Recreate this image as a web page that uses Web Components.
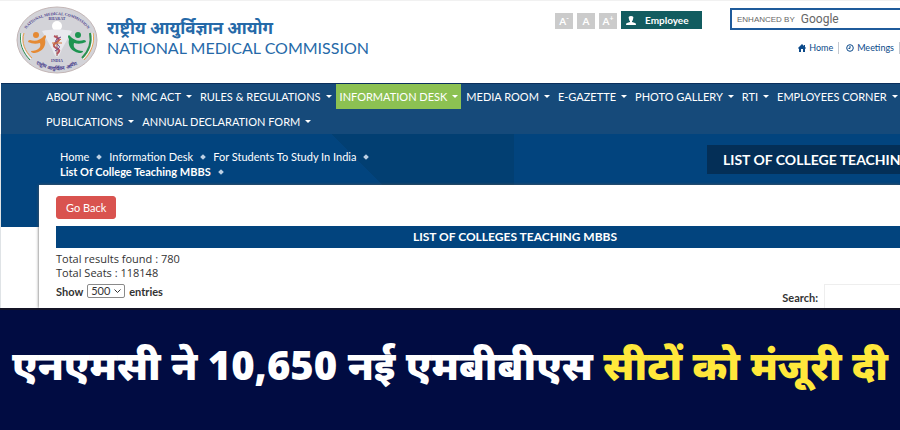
<!DOCTYPE html>
<html lang="hi">
<head>
<meta charset="utf-8">
<meta name="viewport" content="width=device-width, initial-scale=1">
<title>National Medical Commission</title>
<style>
    * {
        box-sizing: border-box;
    }

    body {
        margin: 0px;
        min-height: 100vh;
        display: flex;
        flex-direction: column;
        overflow: hidden;
        background: #ffffff;
        font-family: Lato, "Noto Sans", sans-serif;
        --blue: #02447e;
        --nav: #164a7a;
        --link: #2569a8;
    }
</style>
</head>
<body>
<site-header></site-header>
<site-nav>
    <nav-item>ABOUT NMC</nav-item>
    <nav-item>NMC ACT</nav-item>
    <nav-item>RULES &amp; REGULATIONS</nav-item>
    <nav-item active>INFORMATION DESK</nav-item>
    <nav-item>MEDIA ROOM</nav-item>
    <nav-item>E-GAZETTE</nav-item>
    <nav-item>PHOTO GALLERY</nav-item>
    <nav-item>RTI</nav-item>
    <nav-item>EMPLOYEES CORNER</nav-item>
    <nav-item>PUBLICATIONS</nav-item>
    <nav-item>ANNUAL DECLARATION FORM</nav-item>
</site-nav>
<page-stage>
    <crumb-trail slot="crumbs"></crumb-trail>
    <span slot="title">LIST OF COLLEGE TEACHING</span>
    <college-panel></college-panel>
</page-stage>
<news-banner>एनएमसी ने 10,650 नई एमबीबीएस <span slot="accent">सीटों को मंजूरी दी</span></news-banner>

<script>
class NmcLogo extends HTMLElement {
    constructor() {
        super();
        this.attachShadow({ mode: "open" });
        this.shadowRoot.innerHTML = `
            <style>
                :host {
                    display: block;
                    flex: none;
                    width: 82px;
                    height: 68px;
                }

                svg {
                    display: block;
                    width: 100%;
                    height: 100%;
                }

                text {
                    font-family: "Liberation Serif", serif;
                    font-weight: bold;
                    fill: #4a3f8c;
                    text-anchor: middle;
                }
            </style>
            <svg viewBox="0 0 82 68" role="img" aria-label="National Medical Commission emblem">
                <defs>
                    <path id="top" d="M8 27 A35 27 0 0 1 74 27"/>
                    <path id="bottom" d="M13 54 Q41 74 69 54"/>
                </defs>
                <ellipse cx="41" cy="34" rx="40" ry="33" fill="#d3d3d8" stroke="#c3b6b6"/>
                <g fill="none" stroke-width="1">
                    <path d="M5 27 C3 37 7 47 14 54" stroke="#2c9150"/>
                    <path d="M6 27 C4 37 8 46 15 53" stroke="#ffffff"/>
                    <path d="M8 27 C5 37 9 45 16 52" stroke="#e9a04c"/>
                    <path d="M77 27 C79 37 75 47 68 54" stroke="#e9a04c"/>
                    <path d="M76 27 C78 37 74 46 67 53" stroke="#ffffff"/>
                    <path d="M74 27 C76 37 73 45 66 52" stroke="#2c9150" stroke-width="2"/>
                </g>
                <circle cx="41" cy="20" r="5" fill="#ffffff"/>
                <path d="M26 25 C34 23 48 23 56 25 L46 43 Q43 51 41 51 Q39 51 36 43 Z" fill="#e9e9ee"/>
                <circle cx="20" cy="29" r="3" fill="#e58a34"/>
                <path d="M12 36 Q12 34 14 34 Q22 37 29 29 Q31 30 29 33 Q31 44 19 47 Q15 47 15 45 Q26 44 24 37 Q18 39 12 36 Z" fill="#e58a34"/>
                <circle cx="62" cy="29" r="3" fill="#1d9450"/>
                <path d="M70 36 Q70 34 68 34 Q60 37 53 29 Q51 30 53 33 Q51 44 63 47 Q67 47 67 45 Q56 44 58 37 Q64 39 70 36 Z" fill="#1d9450"/>
                <path d="M41 29 V50" stroke="#8d5a50" stroke-width="1"/>
                <path d="M38 30 Q46 33 41 36 Q35 39 40 42 Q46 44 41 48" fill="none" stroke="#b5525f" stroke-width="2"/>
                <path d="M45 31 Q36 34 42 39 Q46 41 39 45" fill="none" stroke="#6d4791" stroke-width="1"/>
                <path d="M36 37 H46 M37 40 L45 33" stroke="#d3763c" stroke-width="1"/>
                <text font-size="4"><textPath href="#top" startOffset="50%">NATIONAL MEDICAL COMMISSION</textPath></text>
                <text x="41" y="14" font-size="4">BHARAT</text>
                <text x="41" y="56" font-size="4">INDIA</text>
                <text font-size="5"><textPath href="#bottom" startOffset="50%">राष्ट्रीय आयुर्विज्ञान आयोग</textPath></text>
            </svg>
        `;
    }
}

customElements.define("nmc-logo", NmcLogo);

class SiteHeader extends HTMLElement {
    constructor() {
        super();
        this.attachShadow({ mode: "open" });
        this.shadowRoot.innerHTML = `
            <style>
                * {
                    box-sizing: border-box;
                }

                :host {
                    display: flex;
                    align-items: flex-start;
                    height: 83px;
                    padding-left: 16px;
                    border-top: 1px solid #f1f1f1;
                    color: var(--link);
                }

                nmc-logo {
                    margin-top: 5px;
                }

                .names {
                    display: flex;
                    flex-direction: column;
                    flex: 1;
                    margin: 16px 0px 0px 9px;
                    white-space: nowrap;
                }

                .hindi {
                    font-size: 17px;
                    line-height: 21px;
                    font-weight: bold;
                }

                .english {
                    font-size: 16px;
                    line-height: 20px;
                }

                .tools {
                    display: flex;
                    gap: 4px;
                    margin-top: 10px;
                }

                button {
                    border: 0px;
                    padding: 0px;
                    font-family: inherit;
                    color: #ffffff;
                    cursor: pointer;
                }

                .size {
                    width: 18px;
                    height: 16px;
                    margin-top: 2px;
                    background: #cbcbcb;
                    font-size: 10px;
                    font-weight: bold;
                    line-height: 14px;
                }

                sup {
                    font-size: 7px;
                    line-height: 0;
                }

                .employee {
                    display: flex;
                    align-items: center;
                    gap: 9px;
                    width: 81px;
                    height: 18px;
                    padding-left: 5px;
                    background: #125c60;
                    font-size: 10px;
                    font-weight: bold;
                }

                .side {
                    width: 170px;
                    margin: 7px 0px 0px 28px;
                }

                .search {
                    display: flex;
                    align-items: center;
                    gap: 6px;
                    height: 22px;
                    padding-left: 5px;
                    border: 2px solid #1f5b9b;
                    border-right: 0px;
                    color: #666666;
                    font: 8px "Liberation Sans", sans-serif;
                }

                .search b {
                    font: 12px Roboto, sans-serif;
                }

                .search input {
                    flex: 1;
                    min-width: 0px;
                    border: 0px;
                    padding: 0px;
                    outline: none;
                }

                .links {
                    display: flex;
                    align-items: center;
                    justify-content: flex-end;
                    margin-top: 12px;
                    font-size: 9px;
                    line-height: 12px;
                }

                .links a {
                    display: flex;
                    align-items: center;
                    gap: 3px;
                    padding-right: 5px;
                    margin-left: 7px;
                    border-right: 1px solid #c4c9d0;
                    color: #0c4a8a;
                    text-decoration: none;
                }
            </style>
            <nmc-logo></nmc-logo>
            <div class="names">
                <span class="hindi">राष्ट्रीय आयुर्विज्ञान आयोग</span>
                <span class="english">NATIONAL MEDICAL COMMISSION</span>
            </div>
            <div class="tools">
                <button class="size">A<sup>-</sup></button>
                <button class="size">A</button>
                <button class="size">A<sup>+</sup></button>
                <button class="employee">
                    <svg width="10" height="9" viewBox="0 0 10 9" fill="#ffffff"><path d="M5 0 C7 0 8 1 7 3 Q7 5 6 5 V6 L9 7 Q10 7 10 9 H0 Q0 7 1 7 L4 6 V5 Q3 5 3 3 C2 1 3 0 5 0 Z"/></svg>
                    Employee
                </button>
            </div>
            <div class="side">
                <label class="search">ENHANCED BY <b>Google</b><input type="text" aria-label="Search this site"></label>
                <div class="links">
                    <a href="#home">
                        <svg width="8" height="8" viewBox="0 0 8 8" fill="#0c4a8a"><path d="M0 4 L4 0 L6 2 V1 H7 V3 L8 4 L7 5 V8 H5 V5 H3 V8 H1 V5 Z"/></svg>
                        Home
                    </a>
                    <a href="#meetings">
                        <svg width="8" height="8" viewBox="0 0 8 8" fill="none" stroke="#0c4a8a"><circle cx="4" cy="4" r="3.3"/><path d="M4 2 V4.4 H2.4"/></svg>
                        Meetings
                    </a>
                </div>
            </div>
        `;
    }
}

customElements.define("site-header", SiteHeader);

class SiteNav extends HTMLElement {
    constructor() {
        super();
        this.attachShadow({ mode: "open" });
        this.shadowRoot.innerHTML = `
            <style>
                :host {
                    display: block;
                    margin-left: 1px;
                    border-top: 1px solid #0a2f5c;
                    background: var(--nav);
                }

                nav {
                    display: flex;
                    flex-wrap: wrap;
                    margin-right: -8px;
                    padding-left: 41px;
                }
            </style>
            <nav><slot></slot></nav>
        `;
    }
}

customElements.define("site-nav", SiteNav);

class NavItem extends HTMLElement {
    constructor() {
        super();
        this.attachShadow({ mode: "open" });
        this.shadowRoot.innerHTML = `
            <style>
                :host {
                    display: block;
                    margin-right: 1px;
                }

                :host([active]) {
                    background: #8cc152;
                }

                a {
                    display: flex;
                    align-items: center;
                    gap: 5px;
                    padding: 0px 3px 0px 4px;
                    color: #ffffff;
                    font-size: 11px;
                    line-height: 25px;
                    text-decoration: none;
                    white-space: nowrap;
                }

                a::after {
                    content: "";
                    border: 3px solid transparent;
                    border-top-color: #ffffff;
                    border-bottom: 0px;
                }
            </style>
            <a href="#menu"><slot></slot></a>
        `;
    }
}

customElements.define("nav-item", NavItem);

class PageStage extends HTMLElement {
    constructor() {
        super();
        this.attachShadow({ mode: "open" });
        this.shadowRoot.innerHTML = `
            <style>
                :host {
                    display: flex;
                    flex-direction: column;
                    flex: 1;
                    border-left: 1px solid #dfe3e6;
                    background: linear-gradient(var(--blue), var(--blue)) 0px 0px / 100% 93px no-repeat;
                }

                header {
                    display: flex;
                    justify-content: space-between;
                    align-items: flex-start;
                    height: 51px;
                    padding-left: 59px;
                    background:
                        linear-gradient(#023f72, #023f72) 382px 0px / 131px 100% no-repeat,
                        linear-gradient(45deg, transparent 50%, #023f72 50%) 331px 0px / 51px 51px no-repeat;
                }

                .title {
                    box-sizing: border-box;
                    flex: none;
                    width: 193px;
                    margin-top: 11px;
                    padding-left: 16px;
                    overflow: hidden;
                    background: #042f57;
                    color: #ffffff;
                    font-size: 14px;
                    line-height: 29px;
                    font-weight: bold;
                    white-space: nowrap;
                }
            </style>
            <header>
                <slot name="crumbs"></slot>
                <div class="title"><slot name="title"></slot></div>
            </header>
            <slot></slot>
        `;
    }
}

customElements.define("page-stage", PageStage);

class CrumbTrail extends HTMLElement {
    constructor() {
        super();
        this.attachShadow({ mode: "open" });
        this.shadowRoot.innerHTML = `
            <style>
                :host {
                    display: block;
                    width: 340px;
                    margin-top: 15px;
                    color: #ffffff;
                    font-size: 11px;
                    line-height: 15px;
                }

                nav {
                    display: flex;
                    flex-wrap: wrap;
                }

                a,
                b {
                    display: flex;
                    align-items: center;
                    gap: 8px;
                    margin-right: 8px;
                    color: inherit;
                    text-decoration: none;
                    white-space: nowrap;
                }

                a::after,
                b::after {
                    content: "";
                    width: 4px;
                    height: 4px;
                    background: #bcd0e4;
                    transform: rotate(45deg);
                }
            </style>
            <nav aria-label="Breadcrumb">
                <a href="#home">Home</a>
                <a href="#desk">Information Desk</a>
                <a href="#students">For Students To Study In India</a>
                <b>List Of College Teaching MBBS</b>
            </nav>
        `;
    }
}

customElements.define("crumb-trail", CrumbTrail);

class CollegePanel extends HTMLElement {
    constructor() {
        super();
        this.attachShadow({ mode: "open" });
        this.shadowRoot.innerHTML = `
            <style>
                * {
                    box-sizing: border-box;
                }

                :host {
                    display: block;
                    flex: 1;
                    margin-left: 38px;
                    padding: 11px 0px 0px 17px;
                    background: #ffffff;
                    box-shadow: 0px 0px 3px #555555;
                    color: #333333;
                    font-size: 11px;
                }

                button {
                    display: block;
                    height: 23px;
                    padding: 0px 9px;
                    border: 1px solid #d9534f;
                    border-radius: 3px;
                    background: #d9534f;
                    color: #ffffff;
                    font-family: inherit;
                    font-size: 11px;
                }

                h2 {
                    margin: 7px 0px 4px;
                    padding-left: 74px;
                    background: var(--blue);
                    color: #ffffff;
                    font-size: 12px;
                    line-height: 22px;
                    text-align: center;
                }

                p {
                    margin: 0px;
                    font-family: "Open Sans", sans-serif;
                    line-height: 14px;
                }

                .filters {
                    display: flex;
                    justify-content: space-between;
                    align-items: flex-start;
                    height: 24px;
                    margin-top: 4px;
                    overflow: hidden;
                    font-weight: bold;
                }

                label {
                    display: flex;
                    align-items: center;
                    gap: 4px;
                }

                .pick {
                    display: grid;
                    align-items: center;
                    justify-items: end;
                }

                .pick > * {
                    grid-area: 1 / 1;
                }

                .pick svg {
                    margin-right: 4px;
                    pointer-events: none;
                }

                select {
                    appearance: none;
                    width: 38px;
                    height: 14px;
                    padding: 0px 3px;
                    border: 1px solid #8a8a8a;
                    border-radius: 2px;
                    background: #ffffff;
                    color: #333333;
                    font-family: inherit;
                    font-size: 11px;
                    line-height: 12px;
                }

                .find {
                    gap: 6px;
                }

                .find input {
                    width: 76px;
                    height: 27px;
                    border: 1px solid #eeeeee;
                    border-right: 0px;
                }
            </style>
            <button>Go Back</button>
            <h2>LIST OF COLLEGES TEACHING MBBS</h2>
            <p>Total results found : 780</p>
            <p>Total Seats : 118148</p>
            <div class="filters">
                <label>
                    Show
                    <span class="pick">
                        <select><option>500</option></select>
                        <svg width="7" height="5" viewBox="0 0 7 5" fill="none" stroke="#333333"><path d="M0.5 0.5 L3.5 3.5 L6.5 0.5"/></svg>
                    </span>
                    entries
                </label>
                <label class="find">Search: <input type="text"></label>
            </div>
        `;
    }
}

customElements.define("college-panel", CollegePanel);

class NewsBanner extends HTMLElement {
    constructor() {
        super();
        this.attachShadow({ mode: "open" });
        this.shadowRoot.innerHTML = `
            <style>
                :host {
                    display: block;
                    padding: 20px 0px 30px;
                    border-top: 2px solid #141426;
                    background: #010c42;
                }

                h1 {
                    margin: 0px;
                    color: #ffffff;
                    font-family: "Noto Sans", sans-serif;
                    font-size: 40px;
                    line-height: 70px;
                    font-weight: 900;
                    text-align: center;
                    white-space: nowrap;
                }

                ::slotted(span) {
                    color: #ffe83b;
                }
            </style>
            <h1><slot></slot><slot name="accent"></slot></h1>
        `;
    }
}

customElements.define("news-banner", NewsBanner);
</script>
</body>
</html>
